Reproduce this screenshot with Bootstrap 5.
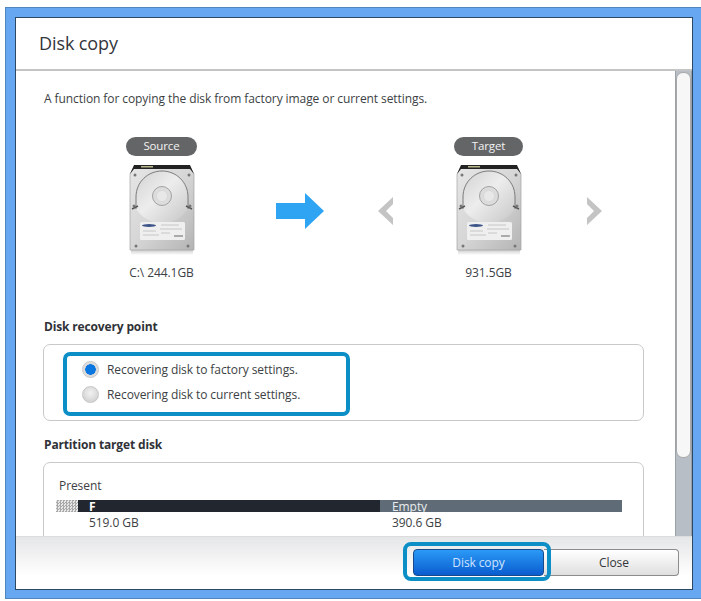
<!DOCTYPE html>
<html lang="en"><head><meta charset="utf-8"><title>Disk copy</title>
<link href="https://cdn.jsdelivr.net/npm/bootstrap@5.3.0/dist/css/bootstrap.min.css" rel="stylesheet">
<style>
html,body{height:100%;background:#fff;overflow:hidden}
body{font-family:"Open Sans","Noto Sans",sans-serif;font-size:12px;color:#3c3f44;letter-spacing:-.08px}
.shell{margin:7px 0 0 5px;height:592px;background:#67a7f1;border:1px solid #4f86bd;border-right:0;padding:9px 8px 8px 9px}
.win{height:100%;background:#fff;border:1px solid #2c4963;overflow:hidden;position:relative}
.head{height:53px;border-bottom:2px solid #c4c4c4;padding-left:23px;font-size:18px;color:#33363b;line-height:50px;letter-spacing:-.1px}
.mid{min-height:0}
.pane{padding:18px 0 0 28px;overflow:hidden;position:relative}
.intro{line-height:20px;margin-bottom:28px}
.disks{height:146px;position:relative;margin-bottom:36px}
.drive{width:71px;text-align:center;line-height:15px;white-space:nowrap}
.tag{height:19px;line-height:18px;border-radius:10px;background:#646567;color:#f2f2f2;font-size:11.5px;letter-spacing:-.12px;margin-bottom:9px}
.drive svg{display:block;margin:0 auto 10px}
.srcd{margin-left:82px;width:71px}
.trgd{width:69px}
.sec{font-weight:700;line-height:16px;margin-bottom:9px;color:#2f3237;letter-spacing:-.15px}
.box{width:601px;margin-left:-1px;border:1px solid #c9c9c9;border-radius:7px}
.box1{height:77px;padding:12px 0 0 38px;margin-bottom:16px;position:relative}
.box2{height:110px;padding:15px 0 0 12px}
.lbl{padding-left:3px;line-height:16px}
.opt{height:25px;margin:0;padding:0;min-height:0;gap:8px}
.opt .form-check-input{float:none;margin:0;width:17px;height:17px;border:1px solid #c6c6c6;background:radial-gradient(circle at 50% 40%,#f2f2f2,#c9c9c9);box-shadow:none;flex:none}
.opt .form-check-input:checked{background:radial-gradient(circle,#0a78e0 0,#0a78e0 5px,#d8d8d8 5.5px,#ececec 100%);border-color:#c6c6c6}
.opt .form-check-label{opacity:1;color:#3c3f44;font-size:12px}
.mark1{position:absolute;left:19px;top:7px;width:287px;height:64px;border:4px solid #0c8ec6;border-radius:7px;pointer-events:none}
.bar{width:566px;height:12px;line-height:14px;margin-top:6px;font-size:12px;overflow:hidden}
.hatch{width:22px;background:repeating-conic-gradient(#a9a9a9 0 25%,#e8e8e8 0 50%) 0 0/3px 3px}
.dark{width:302px;background:#22272f;color:#fff;font-weight:700;padding-left:11px}
.gray{width:242px;background:#5f6c77;color:#e9ecef;padding-left:12px}
.sizes{line-height:16px;margin-top:3px}
.s1{margin-left:33px;width:303px}
.track{width:17px;background:#b7bec6;border-left:1px solid #9aa1a8;border-right:1px solid #9aa1a8;flex:none;padding-top:1px}
.thumb{height:386px;background:#f7f7f7;border:1px solid #a9a9a9;border-radius:7px}
.foot{height:53px;flex:none;background:linear-gradient(#e5e6e7,#fff 75%);border-top:1px solid #dcdcdc;padding:12px 13px 0 0;position:relative;z-index:2}
.btn.go,.btn.end{height:27px;padding:0;font-size:12px;line-height:25px;border-radius:4px;letter-spacing:-.1px}
.btn.go{width:131px;background:linear-gradient(#2b9af6,#0a5ccf);border:1px solid #174a8c;color:#cfe4ff}
.btn.end{width:135px;padding-left:6px;background:linear-gradient(#fff,#dfdfdf);border:1px solid #8c8c8c;border-left:0;color:#33363b;border-radius:0 4px 4px 0}
.mark2{position:absolute;right:141px;top:5px;width:148px;height:39px;border:4px solid #0c8ec6;border-radius:8px;pointer-events:none}
</style></head><body>
<svg width="0" height="0" style="position:absolute"><defs>
<linearGradient id="hddBody" x1="0" y1="0" x2="1" y2="1"><stop offset="0" stop-color="#e6e6e6"/><stop offset=".5" stop-color="#d6d6d6"/><stop offset="1" stop-color="#b4b4b4"/></linearGradient>
<linearGradient id="hddDisc" x1="0" y1="0" x2="1" y2="1"><stop offset="0" stop-color="#d2d2d2"/><stop offset=".45" stop-color="#ededed"/><stop offset="1" stop-color="#c6c6c6"/></linearGradient>
<linearGradient id="hddFade" x1="0" y1="0" x2="0" y2="1"><stop offset="0" stop-color="#c4c4c4"/><stop offset="1" stop-color="#fff"/></linearGradient>
<symbol id="hdd" viewBox="0 0 66 90">
<rect x="2" y="84" width="62" height="6" fill="url(#hddFade)"/>
<path d="M1 9 5 2H61L65 9V85H1Z" fill="url(#hddBody)" stroke="#a4a4a4" stroke-width=".7"/>
<path d="M1 9 5 0H61L65 9 61 4H5Z" fill="#222"/>
<rect x="12" y="1" width="12" height="1.5" fill="#b8b88f"/>
<path d="M7 44V32C7 17 19 6 33 6S59 17 59 32V44C52 54 43 58 33 58S14 54 7 44Z" fill="url(#hddDisc)"/>
<path d="M7 44V32C7 17 19 6 33 6S59 17 59 32V44" fill="none" stroke="#6f6f6f" stroke-width=".9"/>
<circle cx="33" cy="31" r="9.5" fill="#dcdcdc" stroke="#909090" stroke-width=".8"/>
<circle cx="33" cy="31" r="5.5" fill="#e8e8e8" stroke="#cfcfcf" stroke-width=".5"/>
<path d="M3 44 9 41M63 44 57 41" stroke="#555" stroke-width="1.4"/>
<g fill="#777"><circle cx="6" cy="10" r="1.5"/><circle cx="60" cy="10" r="1.5"/><circle cx="5" cy="41" r="1.5"/><circle cx="61" cy="41" r="1.5"/><circle cx="7" cy="81" r="1.5"/><circle cx="59" cy="81" r="1.5"/></g>
<rect x="11" y="57" width="45" height="18" rx="1.5" fill="#efefef"/>
<ellipse cx="20" cy="60.5" rx="7" ry="1.5" fill="#3d5488"/>
<path d="M32 60H50M31 64H53M14 66H27M32 68H41M14 70H30" stroke="#c6c6c6" stroke-width="1"/>
<path d="M45 71H54" stroke="#7c7c7c" stroke-width="1.2"/>
</symbol></defs></svg>

<div class="shell"><div class="win d-flex flex-column">
<div class="head flex-shrink-0">Disk copy</div>
<div class="mid d-flex flex-grow-1">
<div class="pane flex-grow-1">
<div class="intro">A function for copying the disk from factory image or current settings.</div>
<div class="disks d-flex align-items-start">
<div class="drive srcd"><div class="tag">Source</div><svg width="68" height="90"><use href="#hdd"/></svg>C:\ 244.1GB</div>
<svg width="48" height="36" viewBox="0 0 48 36" style="margin:56px 0 0 79px;flex:none"><path d="M0 10H29V0L48 18 29 36V26H0Z" fill="#2fa4f3"/></svg>
<svg width="16" height="28" viewBox="0 0 16 28" style="margin:60px 0 0 54px;flex:none"><path d="M15 0V7L8 14 15 21V28L0 14Z" fill="#c4c4c4"/></svg>
<div class="drive trgd" style="margin-left:60px"><div class="tag">Target</div><svg width="68" height="90"><use href="#hdd"/></svg>931.5GB</div>
<svg width="16" height="28" viewBox="0 0 16 28" style="margin:60px 0 0 63px;flex:none"><path d="M1 0V7L8 14 1 21V28L16 14Z" fill="#c4c4c4"/></svg>
</div>
<div class="sec">Disk recovery point</div>
<div class="box box1">
<div class="form-check opt d-flex align-items-center"><input class="form-check-input" type="radio" name="rp" id="r1" checked><label class="form-check-label" for="r1">Recovering disk to factory settings.</label></div>
<div class="form-check opt d-flex align-items-center"><input class="form-check-input" type="radio" name="rp" id="r2"><label class="form-check-label" for="r2">Recovering disk to current settings.</label></div>
<div class="mark1"></div>
</div>
<div class="sec">Partition target disk</div>
<div class="box box2">
<div class="lbl">Present</div>
<div class="bar d-flex"><div class="hatch"></div><div class="dark">F</div><div class="gray">Empty</div></div>
<div class="sizes d-flex"><div class="s1">519.0 GB</div><div>390.6 GB</div></div>
</div>
</div>
<div class="track"><div class="thumb"></div></div>
</div>
<div class="foot d-flex justify-content-end">
<button type="button" class="btn go">Disk copy</button><button type="button" class="btn end">Close</button>
<div class="mark2"></div>
</div>
</div></div>
</body></html>
